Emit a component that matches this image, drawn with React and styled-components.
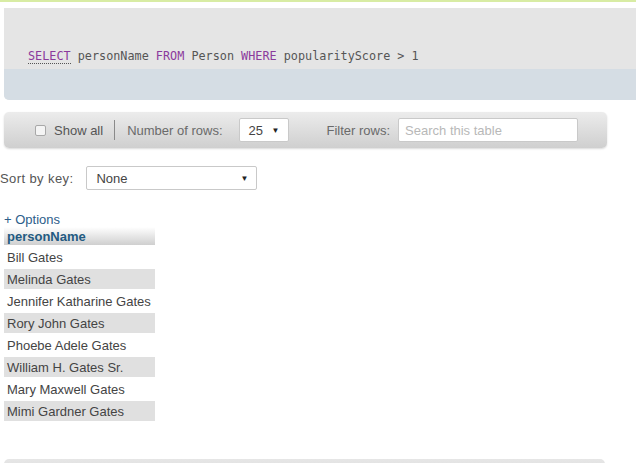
import React from "react";
import styled, { createGlobalStyle } from "styled-components";

const GlobalStyle = createGlobalStyle`
    html, body {
        margin: 0;
        padding: 0;
        background: #fff;
        font-family: "Liberation Sans", Arial, sans-serif;
        font-size: 13px;
        color: #444;
    }
`;

const Page = styled.div`
    width: 636px;
    height: 463px;
    overflow: hidden;
    border-top: 2px solid #d8eca4;
    box-sizing: border-box;
`;

const QueryBox = styled.div`
    margin: 6px -10px 0 4px;
    background: #e5e5e5;
    border-radius: 0 0 0 5px;
    overflow: hidden;
`;

const QueryText = styled.div`
    height: 61px;
    box-sizing: border-box;
    padding: 41px 0 0 24px;
    font-family: "DejaVu Sans Mono", monospace;
    font-size: 11.8px;
    color: #555;
    white-space: pre;
`;

const Keyword = styled.span`
    color: #8b3a9c;
    border-bottom: ${props => props.underline ? '1px dotted #555' : 'none'};
`;

const QueryFooter = styled.div`
    height: 31px;
    background: #d5dde4;
`;

const Toolbar = styled.div`
    margin: 12px 0 0 4px;
    width: 603px;
    height: 36px;
    box-sizing: border-box;
    display: flex;
    align-items: center;
    padding-left: 31px;
    border-radius: 5px;
    background: linear-gradient(#ececec, #cfcfcf);
    box-shadow: 0 1px 2px rgba(0, 0, 0, 0.15);
    color: #555;
    font-size: 13px;
`;

const Check = styled.span`
    width: 11px;
    height: 11px;
    box-sizing: border-box;
    border: 1px solid #a8a8a8;
    border-radius: 2px;
    background: #f4f4f4;
    margin-right: 8px;
`;

const Separator = styled.span`
    width: 1px;
    height: 20px;
    background: #8a8a8a;
    margin: 0 12px 0 11px;
`;

const Label = styled.span`
    margin-right: ${props => props.gap || 0}px;
    color: ${props => props.muted ? '#6a6a6a' : '#555'};
    letter-spacing: ${props => props.spread || 0}px;
`;

const SelectBox = styled.div`
    width: ${props => props.width}px;
    height: 24px;
    box-sizing: border-box;
    background: #fff;
    border: 1px solid #c9c9c9;
    border-radius: 2px;
    display: flex;
    align-items: center;
    justify-content: space-between;
    padding: 0 8px 0 9px;
    color: #444;
    font-size: 13px;
    margin-right: ${props => props.gap || 0}px;
`;

const Arrow = styled.span`
    font-size: 8px;
    color: #222;
`;

const SearchInput = styled.div`
    width: 180px;
    height: 24px;
    box-sizing: border-box;
    background: #fff;
    border: 1px solid #c9c9c9;
    border-radius: 2px;
    padding-left: 6px;
    display: flex;
    align-items: center;
    color: #b8b8b8;
    font-size: 13px;
`;

const SortRow = styled.div`
    display: flex;
    align-items: center;
    margin-top: 18px;
    color: #555;
    font-size: 13px;
`;

const OptionsLink = styled.div`
    margin: 23px 0 0 4px;
    color: #2c5d8a;
    font-size: 13px;
    line-height: 14px;
`;

const Table = styled.table`
    margin-left: 4px;
    border-collapse: separate;
    border-spacing: 0 2px;
    margin-top: -2px;
    font-size: 13px;
`;

const HeadCell = styled.th`
    height: 18px;
    padding: 0 0 0 3px;
    text-align: left;
    font-weight: bold;
    color: #235a81;
    background: linear-gradient(#ffffff, #cfcfcf);
    width: 148px;
`;

const Cell = styled.td`
    height: 20px;
    padding: 0 0 0 3px;
    color: #444;
    background: ${props => props.odd ? '#e0e0e0' : 'transparent'};
    white-space: nowrap;
`;

const BottomBar = styled.div`
    margin: 36px 0 0 4px;
    width: 601px;
    height: 20px;
    border-radius: 5px 5px 0 0;
    background: linear-gradient(#e6e6e6, #dadada);
`;

const people = [
    "Bill Gates",
    "Melinda Gates",
    "Jennifer Katharine Gates",
    "Rory John Gates",
    "Phoebe Adele Gates",
    "William H. Gates Sr.",
    "Mary Maxwell Gates",
    "Mimi Gardner Gates",
];

export default function App() {
    return (
        <Page>
            <GlobalStyle />
            <QueryBox>
                <QueryText>
                    <Keyword underline>SELECT</Keyword> personName <Keyword>FROM</Keyword> Person <Keyword>WHERE</Keyword> popularityScore &gt; 1
                </QueryText>
                <QueryFooter />
            </QueryBox>
            <Toolbar>
                <Check />
                <Label>Show all</Label>
                <Separator />
                <Label gap={16} muted>Number of rows:</Label>
                <SelectBox width={50} gap={38}>
                    <span>25</span>
                    <Arrow>▼</Arrow>
                </SelectBox>
                <Label gap={8} muted>Filter rows:</Label>
                <SearchInput>Search this table</SearchInput>
            </Toolbar>
            <SortRow>
                <Label gap={13} spread={0.4}>Sort by key:</Label>
                <SelectBox width={171}>
                    <span>None</span>
                    <Arrow>▼</Arrow>
                </SelectBox>
            </SortRow>
            <OptionsLink>+ Options</OptionsLink>
            <Table>
                <thead>
                    <tr><HeadCell>personName</HeadCell></tr>
                </thead>
                <tbody>
                    {people.map((name, index) => (
                        <tr key={index}>
                            <Cell odd={index % 2 === 1}>{name}</Cell>
                        </tr>
                    ))}
                </tbody>
            </Table>
            <BottomBar />
        </Page>
    );
}
